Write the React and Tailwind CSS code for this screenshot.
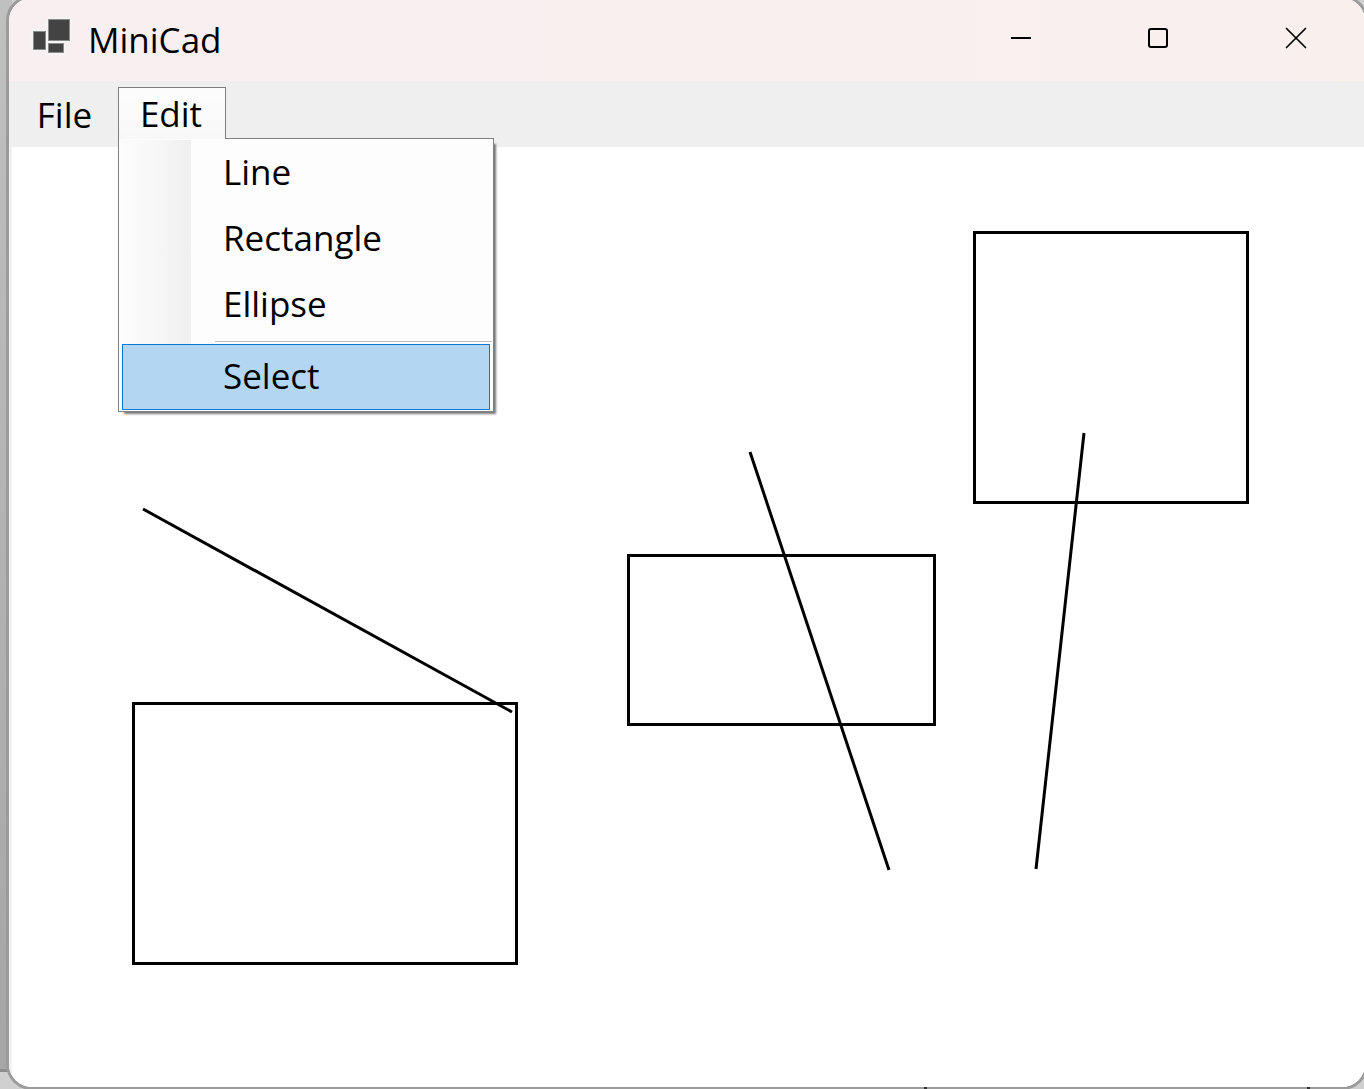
const rectangles = [
  { x: 121, y: 556, width: 384, height: 261 },
  { x: 616, y: 408, width: 307, height: 170 },
  { x: 962, y: 85, width: 274, height: 271 },
];

const lines = [
  { x1: 131, y1: 362, x2: 500, y2: 565 },
  { x1: 738, y1: 305, x2: 877, y2: 723 },
  { x1: 1072, y1: 286, x2: 1024, y2: 722 },
];

function AppIcon() {
  return (
    <svg width="40" height="40" viewBox="0 0 40 40" aria-hidden="true" className="shrink-0 overflow-visible">
      <g fill="#f5f5f5" stroke="#f5f5f5" strokeWidth="4">
        <rect x="1" y="11" width="12" height="18" />
        <rect x="16" y="0" width="21" height="21" />
        <rect x="16" y="24" width="15" height="9" />
      </g>
      <g fill="#434343" stroke="#8a8a8a" strokeWidth="1">
        <rect x="1.5" y="11.5" width="12" height="18" />
        <rect x="16.5" y="-0.5" width="21" height="21" />
        <rect x="16.5" y="23.5" width="15" height="9" />
      </g>
    </svg>
  );
}

function CaptionButton({ label, children }) {
  return (
    <button type="button" aria-label={label} className="flex h-[76px] w-[138px] items-center justify-center">
      <svg width="22" height="22" viewBox="0 0 22 22" fill="none" stroke="#000" aria-hidden="true">
        {children}
      </svg>
    </button>
  );
}

function TitleBar() {
  return (
    <header className="flex h-[83px] items-start bg-linear-to-r from-[#f8eff1] to-[#f9f0ee] pt-[2px] pl-[23px]">
      <div className="flex flex-1 items-center gap-[16px] pt-[14px]">
        <AppIcon />
        <h1 className="text-[35px] leading-[52px]">MiniCad</h1>
      </div>
      <div className="flex">
        <CaptionButton label="Minimize">
          <path d="M2 11H22" strokeWidth="2" />
        </CaptionButton>
        <CaptionButton label="Maximize">
          <rect x="2" y="2" width="18" height="18" rx="2" strokeWidth="2" />
        </CaptionButton>
        <CaptionButton label="Close">
          <path d="M1.5 1.5L20.5 20.5M20.5 1.5L1.5 20.5" strokeWidth="1.7" strokeLinecap="round" />
        </CaptionButton>
      </div>
    </header>
  );
}

function MenuItem({ children }) {
  return (
    <button type="button" role="menuitem" className="block h-[66px] w-full pb-[2px] pl-[101px] text-left">
      {children}
    </button>
  );
}

function EditMenu() {
  return (
    <div className="relative ml-[4px]">
      <button
        type="button"
        aria-expanded="true"
        className="relative z-20 h-[52px] w-[108px] border border-b-0 border-[#808080] bg-linear-to-b from-[#fdfdfd] to-[#f8f8f8] pr-[2px]"
      >
        Edit
      </button>
      <div
        role="menu"
        className="absolute top-[51px] left-0 z-10 w-[376px] border border-[#808080] bg-[#fdfdfd] pt-[1px] pr-[3px] pb-[1px] pl-[3px] shadow-[4px_4px_2px_-2px_#777]"
      >
        <div className="absolute top-[1px] bottom-[1px] left-[2px] w-[70px] bg-linear-to-r from-[#fcfcfc] via-[#f7f7f7] to-[#efefef]" />
        <div className="relative">
          <MenuItem>Line</MenuItem>
          <MenuItem>Rectangle</MenuItem>
          <MenuItem>Ellipse</MenuItem>
          <hr className="mt-[3px] -mr-[2px] mb-[2px] ml-[93px] border-t border-[#bdbdbd]" />
          <button
            type="button"
            role="menuitem"
            className="block h-[66px] w-full border border-[#0078d7] bg-[#b3d7f3] pb-[2px] pl-[100px] text-left"
          >
            Select
          </button>
        </div>
      </div>
    </div>
  );
}

function MenuBar() {
  return (
    <nav className="flex h-[66px] items-start bg-[#efefef] pt-[6px] pl-[3px]">
      <button type="button" className="h-[56px] w-[102px] pl-[3px]">
        File
      </button>
      <EditMenu />
    </nav>
  );
}

function Drawing() {
  return (
    <main className="flex-1 border-l-3 border-[#f1f1f1] bg-white">
      <svg width="1280" height="900" role="img" aria-label="Drawing" fill="none" stroke="#000" strokeWidth="3">
        {rectangles.map((r) => (
          <rect key={r.x} x={r.x + 0.5} y={r.y + 0.5} width={r.width - 1} height={r.height - 1} />
        ))}
        {lines.map((l) => (
          <line key={l.x1} {...l} />
        ))}
      </svg>
    </main>
  );
}

export default function App() {
  return (
    <div className="relative flex h-screen overflow-hidden bg-[#d0d0d0] font-['Open_Sans','Noto_Sans',sans-serif] text-[35px] leading-[52px] text-black">
      <div className="-mr-[6px] mb-[17px] w-[12px] shrink-0 border-b-3 border-[#8c8c8c] bg-linear-to-b from-[#c0c0c0] to-[#a6a6a6]" />
      <div className="relative -mt-[5px] -mr-[4px] -mb-[1px] flex min-w-0 flex-1 flex-col overflow-hidden rounded-[26px] border-3 border-[#9b9b9b] bg-white">
        <TitleBar />
        <MenuBar />
        <Drawing />
      </div>
      <div className="absolute right-[437px] bottom-0 h-[2px] w-[3px] bg-[#303030]" />
      <div className="absolute right-[54px] bottom-0 h-[2px] w-[3px] bg-[#303030]" />
    </div>
  );
}
